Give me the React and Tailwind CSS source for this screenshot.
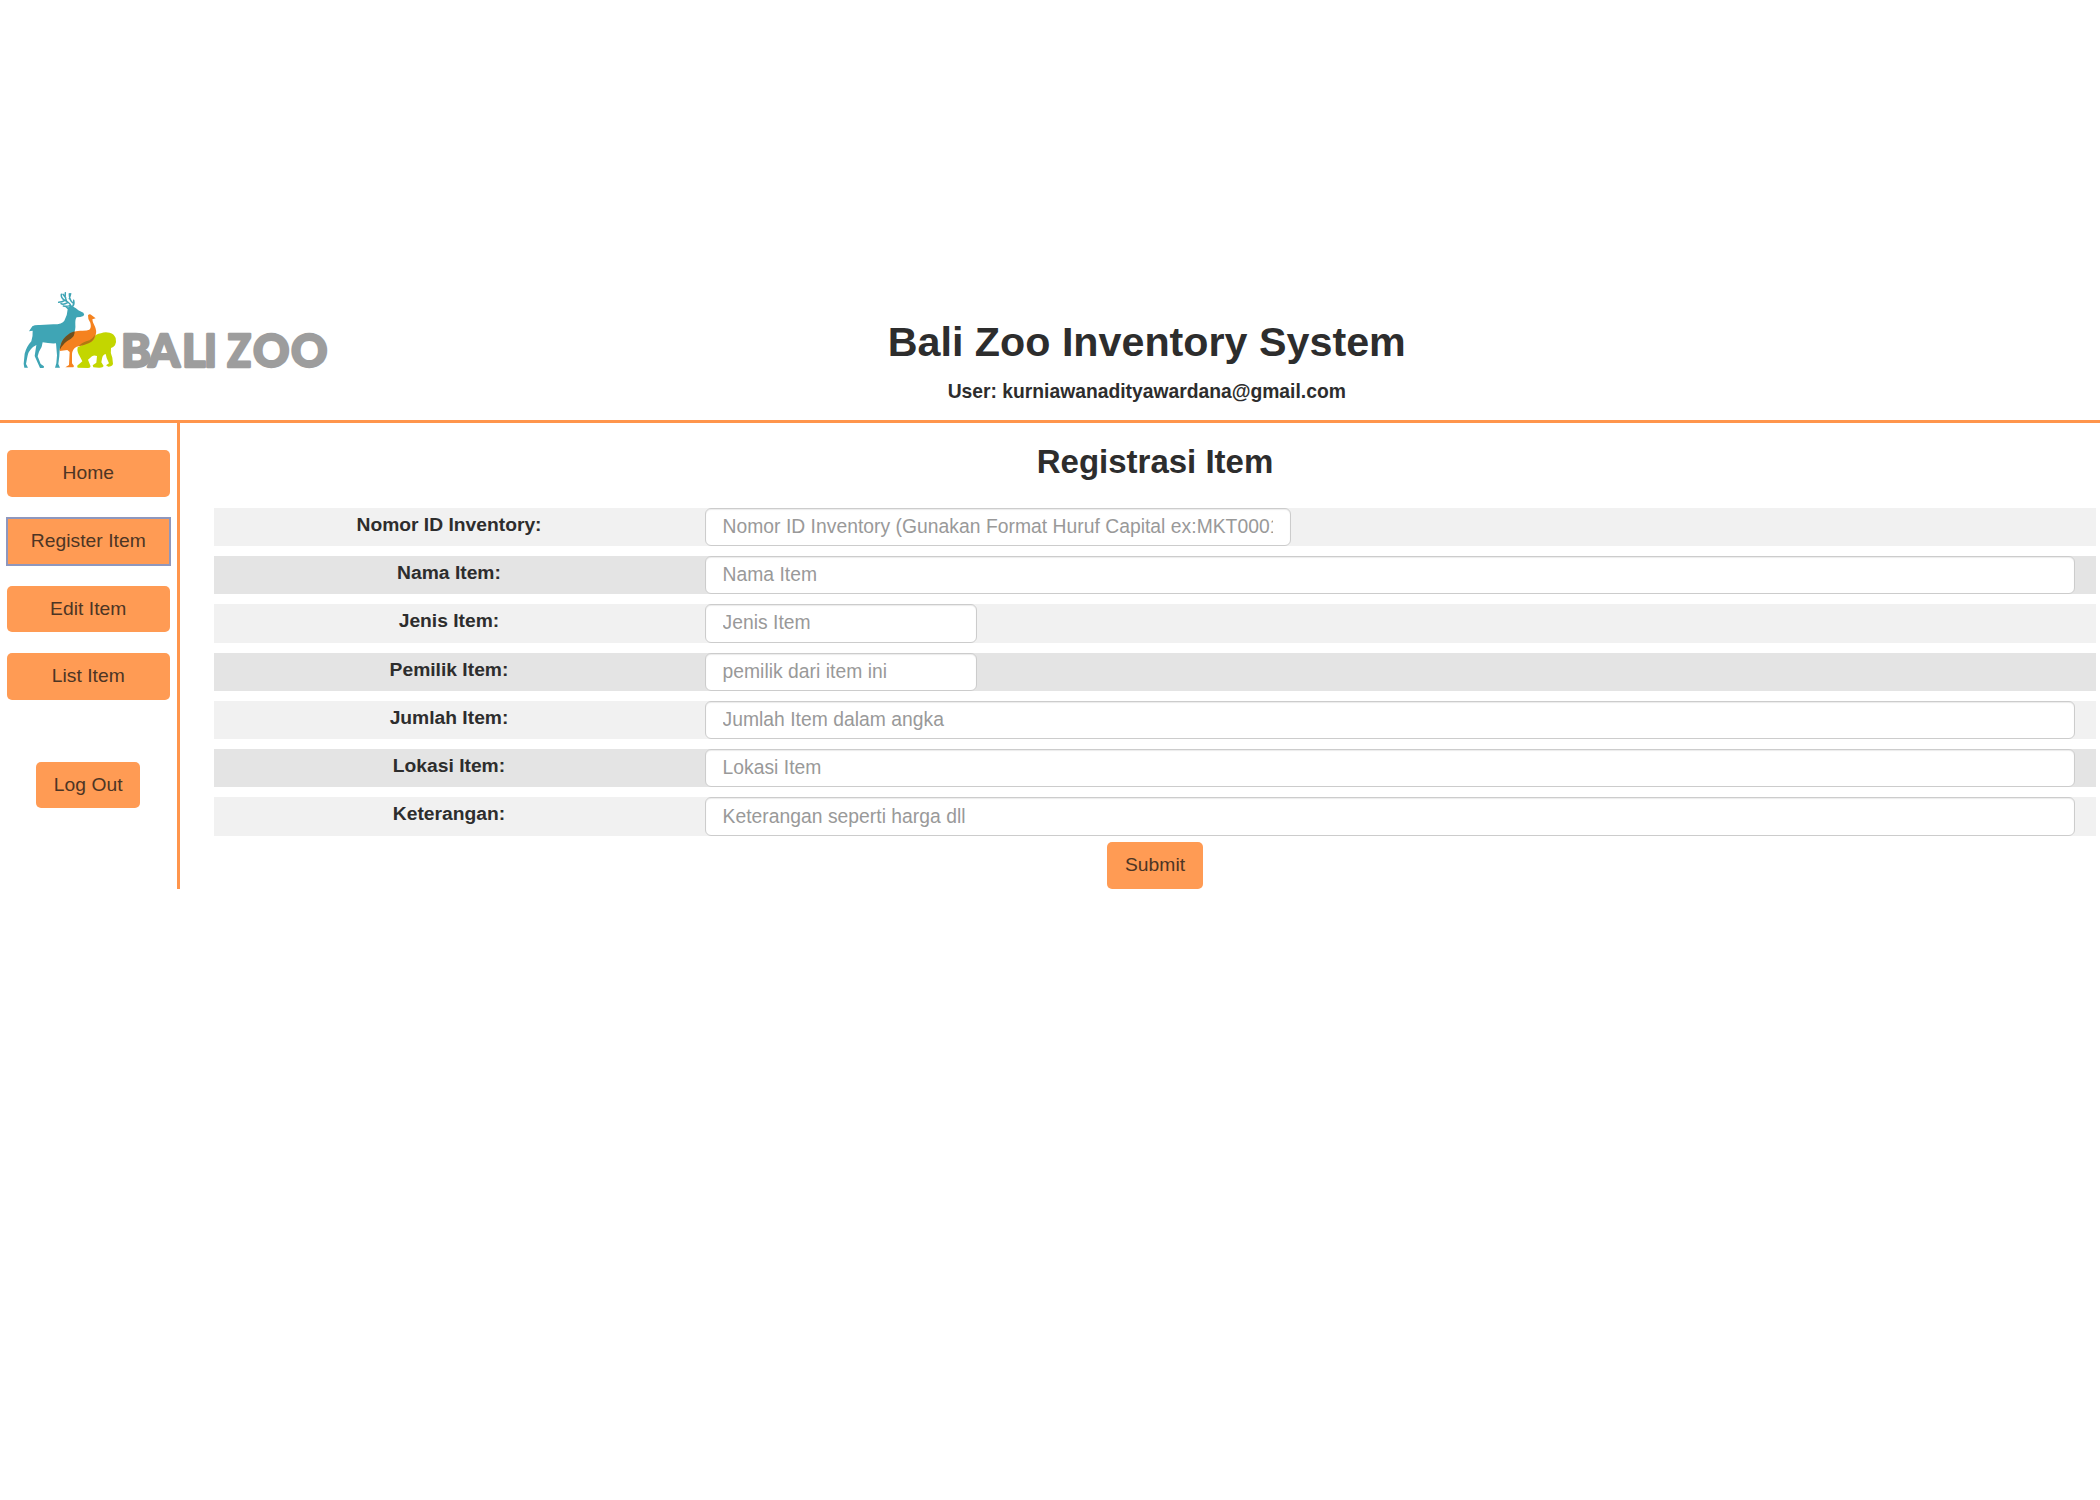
const fields = [
  { label: 'Nomor ID Inventory:', hint: 'Nomor ID Inventory (Gunakan Format Huruf Capital ex:MKT0001)', width: 'w-[586px]' },
  { label: 'Nama Item:', hint: 'Nama Item', width: 'w-[1370px]' },
  { label: 'Jenis Item:', hint: 'Jenis Item', width: 'w-[272px]' },
  { label: 'Pemilik Item:', hint: 'pemilik dari item ini', width: 'w-[272px]' },
  { label: 'Jumlah Item:', hint: 'Jumlah Item dalam angka', width: 'w-[1370px]' },
  { label: 'Lokasi Item:', hint: 'Lokasi Item', width: 'w-[1370px]' },
  { label: 'Keterangan:', hint: 'Keterangan seperti harga dll', width: 'w-[1370px]' },
];

const button =
  'flex items-center justify-center bg-[#ff9b54] text-[19.25px] tracking-[0.05px] text-[#4d3524]';

function Logo() {
  return (
    <svg viewBox="0 0 1050 450" className="-mr-[156.5px] h-[150px] w-[350px] shrink-0" aria-label="Bali Zoo">
      {/* deer */}
      <g fill="#3fa5b5">
        <path d="M87 154 L97 139 Q104 134 120 135 L160 133 Q187 133 193 122 Q202 108 203 88 L195 80 L206 82 L211 75 L220 80 Q228 83 235 91 L250 98 Q255 103 250 108 L241 111 L230 112 Q225 118 226 134 Q228 151 219 162 Q210 174 190 184 Q180 192 179 210 L178 228 L175 252 L180 263 L165 263 L169 250 L171 226 L168 190 Q148 191 128 187 Q127 202 117 215 L113 229 L122 252 L132 259 L131 264 L120 264 L104 228 L109 195 L99 201 Q84 214 82 231 L78 252 L84 263 L73 263 L71 251 L74 221 Q80 199 94 184 Q99 170 98 152 Z" />
      </g>
      <g fill="none" stroke="#3fa5b5" strokeLinecap="round" strokeWidth="4.5">
        <path d="M213 78 Q208 66 194 61 Q182 53 184 43 M195 61 Q186 66 176 67 M203 68 Q190 75 183 71 M200 64 Q193 51 196 38 M197 53 L189 43" />
        <path d="M218 79 Q224 72 221 61 M219 69 Q208 61 208 41 M208 56 L212 41 M209 77 Q202 80 190 78" />
      </g>
      {/* ape */}
      <path
        fill="#c3d600"
        d="M247 195 Q267 187 278 176 Q287 161 303 160 Q314 154 329 158 Q342 161 347 174 Q350 185 345 196 Q340 202 333 204 Q330 219 337 233 L339 252 Q336 260 325 260 L318 256 L327 250 L320 234 L317 222 Q308 224 306 236 L304 247 L311 258 Q309 264 296 263 L280 262 L278 256 L289 248 L291 228 Q282 224 276 229 L264 239 L270 254 Q275 263 264 264 L233 263 Q229 257 237 253 L247 244 L240 230 Q230 216 233 202 Z"
      />
      {/* ostrich */}
      <path
        fill="#f5821f"
        d="M179 213 Q181 184 199 169 Q214 154 240 152 Q260 153 268 149 Q275 143 271 128 Q263 119 264 106 Q269 99 275 106 L287 115 L277 118 Q277 127 284 138 Q291 152 287 165 Q284 182 266 190 Q249 197 230 200 Q217 207 216 222 L216 250 L222 258 L220 262 L196 262 L207 255 L209 216 L202 210 Z"
      />
      <path fill="#6e501f" d="M179 211 Q180 185 198 169 Q210 157 224 154 Q225 168 212 177 Q190 187 179 211 Z" />
      <path fill="#b07a10" d="M237 198 Q247 186 269 181 Q278 175 285 164 Q283 183 265 190 Q251 196 237 198 Z" />
      <text
        y="260"
        fill="#9d9d9d"
        stroke="#9d9d9d"
        strokeWidth="7"
        strokeLinejoin="round"
        className="font-['Lato',sans-serif] text-[135px] font-black"
      >
        <tspan x="363">B</tspan>
        <tspan x="445" textLength="95" lengthAdjust="spacingAndGlyphs">A</tspan>
        <tspan x="546">L</tspan>
        <tspan x="612" textLength="39" lengthAdjust="spacingAndGlyphs">I</tspan>
        <tspan> </tspan>
        <tspan x="682" textLength="72" lengthAdjust="spacingAndGlyphs">Z</tspan>
        <tspan x="759">O</tspan>
        <tspan x="873">O</tspan>
      </text>
    </svg>
  );
}

export default function App() {
  return (
    <div className="min-h-[1500px] w-[2100px] bg-white pt-[280px] font-['Liberation_Sans',Arial,sans-serif] text-[#2d2d2d]">
      <header className="flex h-[143px] border-b-[3px] border-[#ff954c]">
        <Logo />
        <div className="flex grow flex-col items-center pt-[38px] font-bold">
          <h1 className="text-[41.25px] leading-[48px]">Bali Zoo Inventory System</h1>
          <p className="mt-[13px] text-[19.3px] leading-[25px]">User: kurniawanadityawardana@gmail.com</p>
        </div>
      </header>

      <div className="flex h-[466px]">
        <nav className="flex w-[179.5px] shrink-0 flex-col border-r-[3px] border-[#ff954c] pt-[27px] pr-[6.5px] pl-[6.5px]">
          <button className={`${button} h-[47px] rounded-[5px]`}>Home</button>
          <button className={`${button} mt-[21px] h-[47px] outline-2 outline-[#8f97bd] -outline-offset-1`}>
            Register Item
          </button>
          <button className={`${button} mt-[21px] h-[46px] rounded-[5px]`}>Edit Item</button>
          <button className={`${button} mt-[21px] h-[47px] rounded-[5px]`}>List Item</button>
          <button className={`${button} mx-auto mt-[62px] h-[46px] w-[104px] rounded-[5px]`}>Log Out</button>
        </nav>

        <main className="flex grow flex-col pr-[4px] pl-[34.5px]">
          <h2 className="mt-[20px] text-center text-[33px] leading-[38px] font-bold">Registrasi Item</h2>
          <form className="mt-[26.7px] flex flex-col gap-[10px]">
            {fields.map((field) => (
              <div key={field.label} className="flex h-[38.3px] odd:bg-[#f1f1f1] even:bg-[#e4e4e4]">
                <label className="w-[470px] text-center text-[19.25px] leading-[34.5px] font-bold">{field.label}</label>
                <input
                  placeholder={field.hint}
                  className={`${field.width} ml-[20.5px] h-full rounded-[6px] border border-[#cccccc] bg-white px-[17px] text-[19.3px] tracking-[0.03px] shadow-[inset_0_1px_1px_rgba(0,0,0,0.08)] placeholder:text-[#999999]`}
                />
              </div>
            ))}
          </form>
          <button className={`${button} mx-auto mt-[6.3px] h-[47px] w-[96px] rounded-[5px]`}>Submit</button>
        </main>
      </div>
    </div>
  );
}
